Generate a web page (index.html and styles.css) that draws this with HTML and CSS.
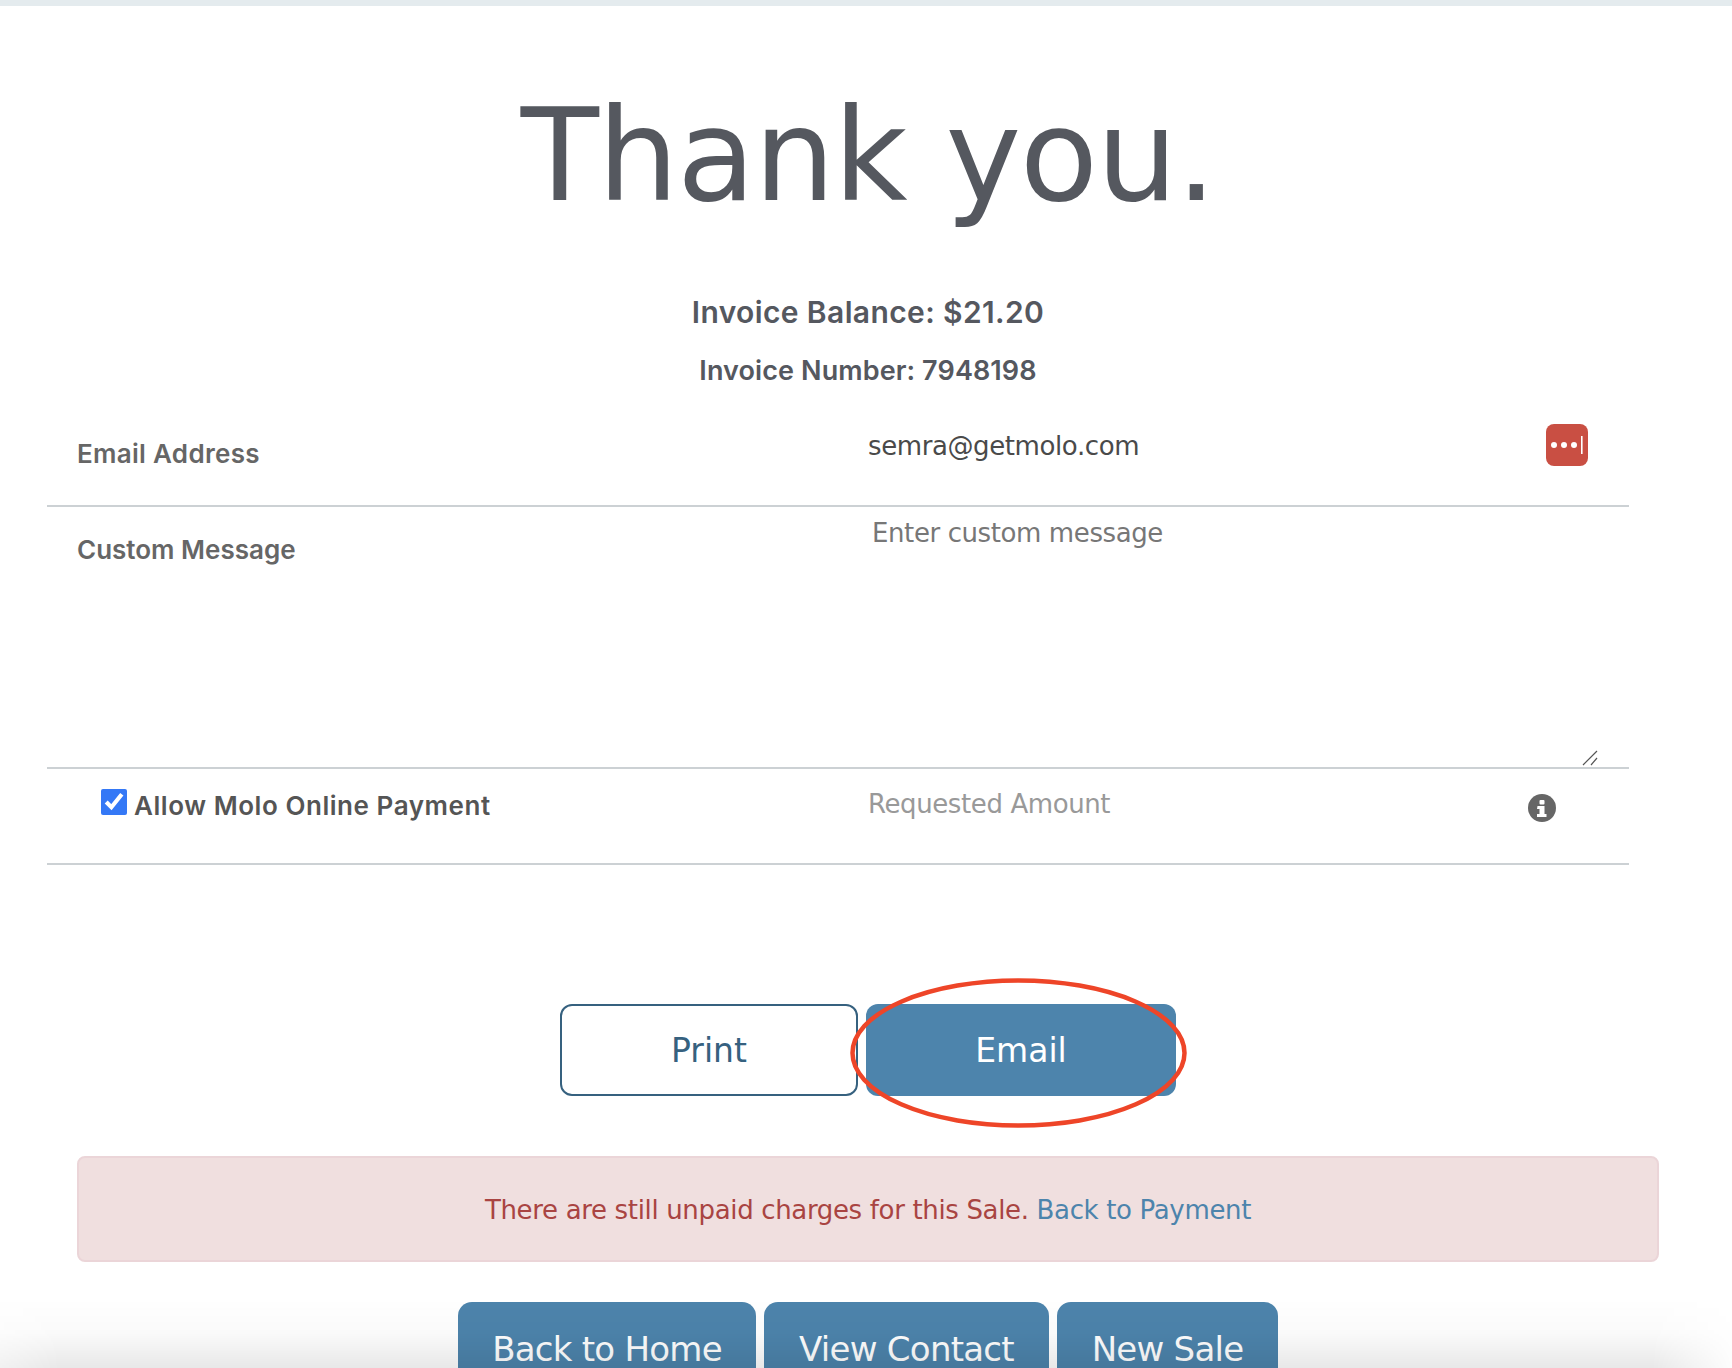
FILE: index.html
```html
<!DOCTYPE html>
<html lang="en">
<head>
  <meta charset="UTF-8">
  <title>Thank you</title>
  <link rel="stylesheet" href="styles.css">
</head>
<body>
  <div class="top-band"></div>

  <div class="container">
    <h1>Thank you.</h1>
    <p class="balance">Invoice Balance: $21.20</p>
    <p class="number">Invoice Number: 7948198</p>

    <form class="form-rows">
      <div class="row row-email">
        <label class="row-label" for="email">Email Address</label>
        <div class="row-field">
          <input class="field" type="text" id="email" value="semra@getmolo.com">
          <svg class="pass-icon" viewBox="0 0 42 42">
            <rect width="42" height="42" rx="8" fill="#c94f43"/>
            <circle cx="8" cy="21" r="3" fill="#fff"/>
            <circle cx="18" cy="21" r="3" fill="#fff"/>
            <circle cx="28" cy="21" r="3" fill="#fff"/>
            <rect x="35" y="12" width="1.6" height="18" fill="#fff"/>
          </svg>
        </div>
      </div>

      <div class="row row-message">
        <label class="row-label" for="message">Custom Message</label>
        <div class="row-field">
          <textarea class="message" id="message" placeholder="Enter custom message"></textarea>
          <svg class="grip" viewBox="0 0 16 16">
            <path d="M1 15L15 1M9 15L15 8" fill="none" stroke="#555" stroke-width="1.200"/>
          </svg>
        </div>
      </div>

      <div class="row row-online">
        <label class="online-label" for="online">
          <input class="online-check" type="checkbox" id="online" checked>
          Allow Molo Online Payment
        </label>
        <div class="row-field">
          <input class="field amount" type="text" placeholder="Requested Amount">
          <svg class="info-icon" viewBox="0 0 28 28">
            <circle cx="14" cy="14" r="14" fill="#666"/>
            <rect x="11.5" y="6" width="5" height="4.4" rx="1" fill="#fff"/>
            <path d="M9.500 12h7v8h2v3h-9.500v-3h2.500v-5h-2.500z" fill="#fff"/>
          </svg>
        </div>
      </div>
    </form>

    <div class="send-buttons">
      <button type="button" class="btn btn-outline">Print</button>
      <button type="button" class="btn btn-solid">Email</button>
    </div>

    <div class="alert">There are still unpaid charges for this Sale. <a href="#">Back to Payment</a></div>

    <div class="nav-buttons">
      <button type="button" class="btn-nav btn-home">Back to Home</button>
      <button type="button" class="btn-nav btn-contact">View Contact</button>
      <button type="button" class="btn-nav btn-sale">New Sale</button>
    </div>
  </div>

  <svg class="annotation" viewBox="0 0 338 150">
    <ellipse cx="168.500" cy="75" rx="166" ry="72.500" fill="none" stroke="#ee4528" stroke-width="4.500"/>
  </svg>
  <div class="bottom-fade"></div>
</body>
</html>
```

FILE: styles.css
```css
html, body {
  height: 100%;
}

body {
  position: relative;
  height: 1368px;
  margin: 0;
  overflow: hidden;
  background-color: #fff;
  font-family: "DejaVu Sans", sans-serif;
  color: #55585f;
}

.top-band {
  height: 6px;
  background-color: #e4ebee;
}

.container {
  padding: 0 73px 0 77px;
}

h1 {
  margin: 75px 0 0;
  font-size: 128px;
  line-height: 150px;
  font-weight: 400;
  letter-spacing: -1.5px;
  text-align: center;
}

.balance,
.number {
  margin: 0;
  font-family: Inter, sans-serif;
  font-weight: 600;
  text-align: center;
}

.balance {
  margin-top: 61px;
  font-size: 30px;
  line-height: 40px;
  letter-spacing: .38px;
}

.number {
  margin-top: 20px;
  font-size: 27px;
  line-height: 38px;
  letter-spacing: .1px;
}

.form-rows {
  margin: 0 30px 0 -30px;
}

.row {
  display: grid;
  grid-template-columns: 1fr 1fr;
  border-bottom: 2px solid #ccd1d4;
}

.row-email {
  height: 115px;
}

.row-message {
  height: 260px;
}

.row-online {
  height: 94px;
}

.row-label {
  padding: 25px 0 0 30px;
  font-family: Inter, sans-serif;
  font-size: 26px;
  line-height: 36px;
  font-weight: 600;
  color: #666;
}

.row-email .row-label {
  padding-top: 46px;
  letter-spacing: .3px;
}

.row-field {
  position: relative;
  padding: 0 30px;
}

.field {
  display: block;
  width: 100%;
  box-sizing: border-box;
  height: 60px;
  margin-top: 5px;
  padding: 0;
  border: none;
  outline: none;
  background: none;
  font-family: "DejaVu Sans", sans-serif;
  font-size: 26px;
  letter-spacing: -.4px;
  color: #4a4a4a;
}

.row-email .field {
  margin-top: 26px;
}

.amount::placeholder {
  color: #999;
}

.pass-icon {
  position: absolute;
  top: 34px;
  right: 41px;
  width: 42px;
  height: 42px;
}

.info-icon {
  position: absolute;
  top: 25px;
  right: 73px;
  width: 28px;
  height: 28px;
}

.grip {
  position: absolute;
  top: 243px;
  right: 31px;
  width: 16px;
  height: 16px;
}

.message {
  display: block;
  width: 100%;
  box-sizing: border-box;
  height: 258px;
  margin-top: 0;
  padding: 11px 4px 6px;
  border: none;
  outline: none;
  resize: none;
  background: none;
  font-family: "DejaVu Sans", sans-serif;
  font-size: 26px;
  letter-spacing: -.4px;
}

.message::placeholder {
  color: #777;
}

.online-label {
  display: flex;
  align-items: flex-start;
  gap: 7px;
  padding: 20px 0 0 54px;
  font-family: Inter, sans-serif;
  font-size: 26px;
  line-height: 33px;
  font-weight: 600;
  letter-spacing: .55px;
  color: #555;
}

.online-check {
  width: 26px;
  height: 26px;
  margin: 0;
  accent-color: #3478f6;
}

.send-buttons {
  display: flex;
  justify-content: center;
  gap: 8px;
  margin: 139px 0 0;
}

.btn {
  height: 92px;
  border-radius: 12px;
  font-family: "DejaVu Sans", sans-serif;
  font-size: 33px;
  cursor: pointer;
}

.btn-outline {
  width: 298px;
  border: 2px solid #36617f;
  background-color: #fff;
  color: #36617f;
}

.btn-solid {
  width: 310px;
  border: none;
  background-color: #4d84ac;
  color: #fff;
}

.alert {
  margin-top: 60px;
  height: 106px;
  box-sizing: border-box;
  border: 2px solid #ebd5d8;
  border-radius: 8px;
  background-color: #f0dfdf;
  color: #a94442;
  font-size: 26px;
  line-height: 104px;
  letter-spacing: -.34px;
  text-align: center;
}

.alert a {
  color: #4d84ac;
  text-decoration: none;
}

.nav-buttons {
  display: flex;
  justify-content: center;
  gap: 8px;
  margin: 40px 0 0;
}

.btn-nav {
  height: 100px;
  padding: 0 0 6px;
  border: none;
  border-radius: 14px;
  background-color: #4d84ac;
  color: #fff;
  font-family: "DejaVu Sans", sans-serif;
  font-size: 34px;
  letter-spacing: -.75px;
}

.btn-home {
  width: 298px;
}

.btn-contact {
  width: 285px;
}

.btn-sale {
  width: 221px;
}

.annotation {
  position: absolute;
  top: 978px;
  left: 850px;
  width: 338px;
  height: 150px;
}

.bottom-fade {
  position: absolute;
  left: 0;
  right: 0;
  bottom: 0;
  height: 70px;
  background: linear-gradient(to bottom, rgba(0, 0, 0, 0), rgba(0, 0, 0, .02) 50%, rgba(0, 0, 0, .09));
  -webkit-mask-image: linear-gradient(to right, rgba(0, 0, 0, .6), #000 60px, #000 calc(100% - 80px), rgba(0, 0, 0, .1));
  mask-image: linear-gradient(to right, rgba(0, 0, 0, .6), #000 60px, #000 calc(100% - 80px), rgba(0, 0, 0, .1));
  pointer-events: none;
}
```
